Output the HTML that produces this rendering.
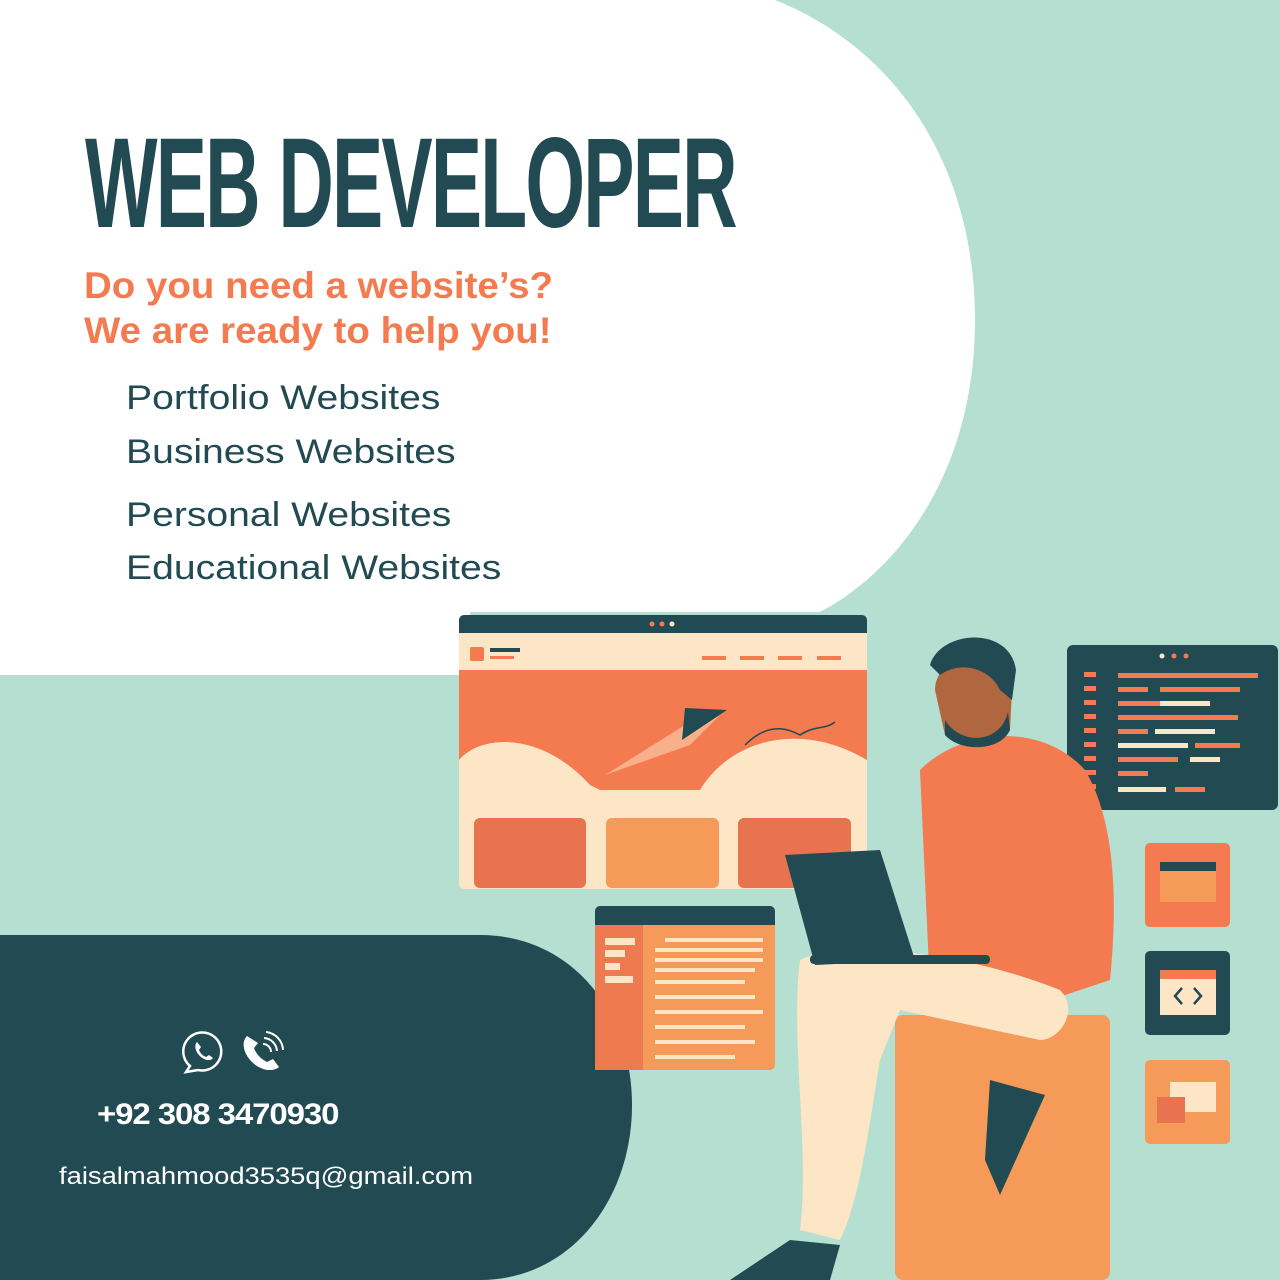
<!DOCTYPE html>
<html><head><meta charset="utf-8"><style>
body{margin:0;width:1280px;height:1280px;overflow:hidden;background:#b5dfd0;font-family:"Liberation Sans",sans-serif;position:relative}
.t{position:absolute;white-space:nowrap;transform-origin:0 0}
.l{font-size:34px;color:#214a52;line-height:40px;transform:scaleX(1.15)}
</style></head><body>
<svg width="1280" height="1280" style="position:absolute;left:0;top:0">
<path d="M0 0 H775 C900 50 975 170 975 320 C975 470 900 570 820 612 L0 612 Z" fill="#fff"/>
<rect x="0" y="600" width="470" height="75" fill="#fff"/>
<path d="M0 935 H480 C570 935 632 1010 632 1105 C632 1200 570 1280 480 1280 H0 Z" fill="#214a52"/>
<rect x="459" y="615" width="408" height="274" rx="5" fill="#fce6c6"/>
<path d="M459 620 a5 5 0 0 1 5 -5 H862 a5 5 0 0 1 5 5 V633 H459Z" fill="#214a52"/>
<circle cx="652" cy="624" r="2.5" fill="#f47a50"/><circle cx="662" cy="624" r="2.5" fill="#f47a50"/><circle cx="672" cy="624" r="2.5" fill="#fce6c6"/>
<rect x="470" y="647" width="14" height="14" rx="2" fill="#f47a50"/><rect x="490" y="648" width="30" height="4" fill="#214a52"/><rect x="490" y="656" width="24" height="3" fill="#f47a50"/>
<g fill="#f47a50"><rect x="702" y="656" width="24" height="4"/><rect x="740" y="656" width="24" height="4"/><rect x="778" y="656" width="24" height="4"/><rect x="817" y="656" width="24" height="4"/></g>
<rect x="459" y="670" width="408" height="138" fill="#f47a50"/>
<path d="M459 760 C480 735 540 730 590 785 L600 790 L700 790 C730 740 800 720 867 760 V830 H459Z" fill="#fce6c6"/>
<path d="M605 775 L685 725 L725 710 L690 745Z" fill="#fce6c6" opacity=".5"/>
<path d="M682 740 L727 710 L685 708Z" fill="#214a52"/>
<path d="M745 745 C770 720 790 730 800 735 C815 725 825 730 835 722" stroke="#214a52" stroke-width="1.5" fill="none"/>
<rect x="474" y="818" width="112" height="70" rx="6" fill="#e8734f"/>
<rect x="606" y="818" width="113" height="70" rx="6" fill="#f59a58"/>
<rect x="738" y="818" width="113" height="70" rx="6" fill="#e8734f"/>
<rect x="595" y="906" width="180" height="164" rx="5" fill="#f59a58"/>
<path d="M595 911 a5 5 0 0 1 5 -5 H770 a5 5 0 0 1 5 5 V925 H595Z" fill="#214a52"/>
<rect x="595" y="925" width="48" height="145" fill="#ee7a50"/>
<g fill="#fce6c6"><rect x="605" y="938" width="30" height="7"/><rect x="605" y="950" width="20" height="7"/><rect x="605" y="963" width="15" height="7"/><rect x="605" y="976" width="28" height="7"/>
<rect x="665" y="938" width="98" height="4"/><rect x="655" y="948" width="108" height="4"/><rect x="655" y="958" width="108" height="4"/><rect x="655" y="968" width="100" height="4"/><rect x="655" y="980" width="90" height="4"/><rect x="655" y="995" width="100" height="4"/><rect x="655" y="1010" width="108" height="4"/><rect x="655" y="1025" width="90" height="4"/><rect x="655" y="1040" width="100" height="4"/><rect x="655" y="1055" width="80" height="4"/></g>
<rect x="1067" y="645" width="211" height="165" rx="6" fill="#214a52"/>
<circle cx="1162" cy="656" r="2.5" fill="#fce6c6"/><circle cx="1174" cy="656" r="2.5" fill="#f47a50"/><circle cx="1186" cy="656" r="2.5" fill="#f47a50"/>
<g fill="#f47a50"><rect x="1084" y="672" width="12" height="5"/><rect x="1084" y="686" width="12" height="5"/><rect x="1084" y="700" width="12" height="5"/><rect x="1084" y="714" width="12" height="5"/><rect x="1084" y="728" width="12" height="5"/><rect x="1084" y="742" width="12" height="5"/><rect x="1084" y="756" width="12" height="5"/><rect x="1084" y="770" width="12" height="5"/><rect x="1084" y="784" width="12" height="5"/>
<rect x="1118" y="673" width="140" height="5"/><rect x="1118" y="687" width="30" height="5"/><rect x="1160" y="687" width="80" height="5"/><rect x="1118" y="701" width="60" height="5"/><rect x="1118" y="715" width="120" height="5"/><rect x="1118" y="729" width="30" height="5"/><rect x="1195" y="743" width="45" height="5"/><rect x="1118" y="757" width="60" height="5"/><rect x="1118" y="771" width="30" height="5"/><rect x="1175" y="787" width="30" height="5"/></g>
<g fill="#fce6c6"><rect x="1160" y="701" width="50" height="5"/><rect x="1155" y="729" width="60" height="5"/><rect x="1118" y="743" width="70" height="5"/><rect x="1190" y="757" width="30" height="5"/><rect x="1118" y="787" width="48" height="5"/></g>
<rect x="1145" y="843" width="85" height="84" rx="5" fill="#f47a50"/><rect x="1160" y="862" width="56" height="40" fill="#f59a58"/><rect x="1160" y="862" width="56" height="9" fill="#214a52"/>
<rect x="1145" y="951" width="85" height="84" rx="5" fill="#214a52"/><rect x="1160" y="970" width="56" height="45" fill="#fce6c6"/><rect x="1160" y="970" width="56" height="9" fill="#f47a50"/>
<path d="M1182 988 l-7 8 7 8 M1194 988 l7 8 -7 8" stroke="#214a52" stroke-width="2.5" fill="none"/>
<rect x="1145" y="1060" width="85" height="84" rx="5" fill="#f59a58"/><rect x="1170" y="1082" width="46" height="30" fill="#fce6c6"/><rect x="1157" y="1097" width="28" height="26" fill="#e8734f"/>
<rect x="895" y="1015" width="215" height="265" rx="8" fill="#f59a58"/>
<path d="M920 770 C960 730 1040 720 1085 770 C1115 820 1118 900 1110 980 L1050 1000 L930 990 Z" fill="#f47a50"/>
<path d="M935 690 C935 650 1010 640 1012 690 L1010 730 C1000 748 960 750 945 735 Z" fill="#b0663e"/>
<path d="M930 665 C940 630 1010 625 1016 670 L1012 700 L1000 690 C990 668 960 660 940 675 Z" fill="#214a52"/>
<path d="M945 720 C960 745 1000 745 1008 712 L1010 730 C1000 752 960 752 945 735Z" fill="#214a52"/>
<path d="M800 960 C840 940 960 950 1060 990 C1080 1010 1060 1040 1040 1040 L900 1010 L880 1060 C870 1120 860 1200 840 1240 L800 1230 C810 1150 790 1040 800 960 Z" fill="#fce6c6"/>
<path d="M990 1080 L1045 1095 L1000 1195 L985 1160Z" fill="#214a52"/>
<path d="M790 1240 L840 1245 L830 1280 L730 1280 Z" fill="#214a52"/>
<path d="M785 855 L880 850 L915 960 L815 965 Z" fill="#214a52"/>
<rect x="810" y="955" width="180" height="9" rx="4" fill="#214a52"/>
<g stroke="#fff" stroke-width="2.5" fill="none"><path d="M190 1066 A19 19 0 1 1 198 1070 L186 1072 Z"/></g>
<path d="M197 1042 c-3 3 -2 10 4 15 c5 4 10 4 12 1 l-4 -3 l-3 2 c-3 -1 -6 -4 -7 -7 l2 -3 z" fill="#fff"/>
<path d="M247 1036 c-6 6 -4 18 6 27 c9 8 20 9 26 4 l-6 -8 l-6 3 c-6 -3 -11 -8 -13 -14 l4 -5 z" fill="#fff"/>
<g stroke="#fff" stroke-width="2" fill="none"><path d="M263 1044 a8 8 0 0 1 8 8"/><path d="M264 1038 a14 14 0 0 1 13 13"/><path d="M266 1032 a19 19 0 0 1 17 18"/></g>
</svg>
<div class="t" style="left:85px;top:120px;font-weight:bold;font-size:128px;color:#214a52;transform:scaleX(0.6);letter-spacing:-3px;line-height:128px">WEB DEVELOPER</div>
<div class="t" style="left:84px;top:263px;font-weight:bold;font-size:37px;color:#f47a50;line-height:45px;transform:scaleX(1.04)">Do you need a website’s?<br>We are ready to help you!</div>
<div class="t l" style="left:126px;top:378px">Portfolio Websites</div>
<div class="t l" style="left:126px;top:432px">Business Websites</div>
<div class="t l" style="left:126px;top:495px">Personal Websites</div>
<div class="t l" style="left:126px;top:548px">Educational Websites</div>
<div class="t" style="left:97px;top:1098px;font-weight:bold;font-size:30px;color:#fff;letter-spacing:-1px;transform:scaleX(1.1)">+92 308 3470930</div>
<div class="t" style="left:59px;top:1163px;font-size:24px;color:#fff;transform:scaleX(1.14)">faisalmahmood3535q@gmail.com</div>
</body></html>
